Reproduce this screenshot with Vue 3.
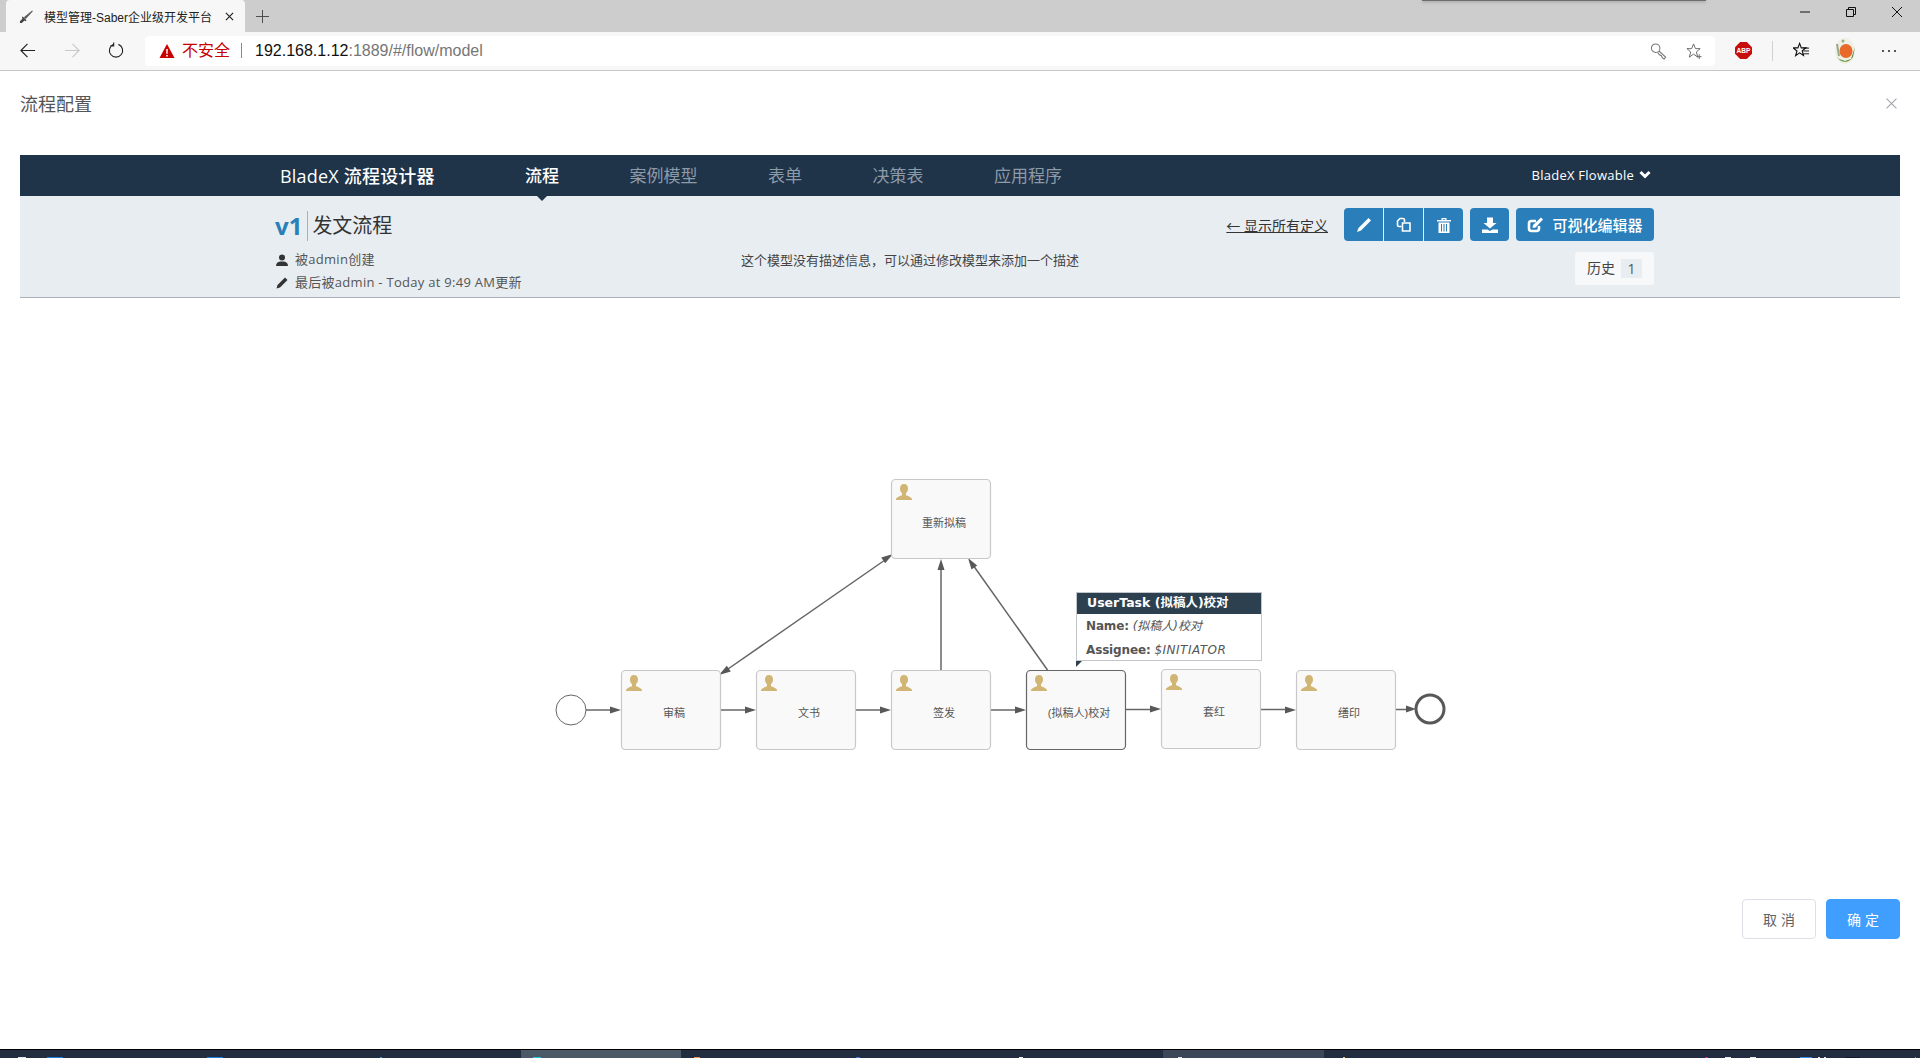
<script setup>
const navItems = ['案例模型', '表单', '决策表', '应用程序']

const nodes = [
  { x: 621, y: 670, label: '审稿', dy: 47 },
  { x: 756, y: 670, label: '文书', dy: 47 },
  { x: 891, y: 670, label: '签发', dy: 47 },
  { x: 1026, y: 670, label: '(拟稿人)校对', dy: 47, active: true },
  { x: 1161, y: 669, label: '套红', dy: 47 },
  { x: 1296, y: 670, label: '缮印', dy: 47 },
  { x: 891, y: 479, label: '重新拟稿', dy: 48 }
]

const edges = [
  { d: 'M586 710H612', arrows: ['M621 710l-11 -3.5v7z'] },
  { d: 'M720 710H747', arrows: ['M756 710l-11 -3.5v7z'] },
  { d: 'M855 710H882', arrows: ['M891 710l-11 -3.5v7z'] },
  { d: 'M990 710H1017', arrows: ['M1026 710l-11 -3.5v7z'] },
  { d: 'M1125 709.5H1152', arrows: ['M1161 709l-11 -3.5v7z'] },
  { d: 'M1260 709.5H1287', arrows: ['M1296 710l-11 -3.5v7z'] },
  { d: 'M1395 709.5H1408', arrows: ['M1416 709l-10 -3.5v7z'] },
  { d: 'M728 669L885 560', arrows: ['M719 675l7.8 -9.2l4 5.8z', 'M893 554l-7.8 9.2l-4 -5.8z'] },
  { d: 'M941 670V569', arrows: ['M941 559l-3.5 11h7z'] },
  { d: 'M1047.5 670L973 565', arrows: ['M968 558l9.2 7.6l-5.7 4z'] }
]

const chips = [
  { left: 18, width: 8, color: '#e8e8e8' },
  { left: 47, width: 16, color: '#1a7fe0' },
  { left: 207, width: 16, color: '#1a7fe0' },
  { left: 380, width: 2, color: '#2a9fd8' },
  { left: 533, width: 8, color: '#26c6da' },
  { left: 694, width: 6, color: '#e8975a' },
  { left: 856, width: 4, color: '#3b78d8' },
  { left: 1019, width: 4, color: '#f0f0f0' },
  { left: 1178, width: 4, color: '#e0e0e0' },
  { left: 1343, width: 2, color: '#e8d060' },
  { left: 1705, width: 3, color: '#e010a0' },
  { left: 1725, width: 6, color: '#e8e8e8' },
  { left: 1750, width: 6, color: '#e8e8e8' },
  { left: 1800, width: 12, color: '#3a8ee0' },
  { left: 1818, width: 2, color: '#e8e8e8' },
  { left: 1824, width: 2, color: '#e8e8e8' },
  { left: 1845, width: 15, color: '#111a26' },
  { left: 1915, width: 1, color: '#8a94a0' }
]
</script>

<template>
  <div class="screen">
    <div class="tabstrip">
      <div class="tab">
        <svg class="favicon" viewBox="0 0 16 16"><path d="M14 1.5l.8.8-7.6 8.4-2-2z" fill="#5c5c5c"/><path d="M4 8l4 4-1 1-1.2-.8L3 15l-2 0 0-2 2.8-2.8L3 9z" fill="#444"/></svg>
        <span class="tab-title">模型管理-Saber企业级开发平台</span>
        <svg class="tab-x" viewBox="0 0 10 10"><path d="M1 1l8 8M9 1l-8 8" stroke="#222" stroke-width="1.3"/></svg>
      </div>
      <svg class="tab-plus" viewBox="0 0 14 14"><path d="M7 0v14M0 7h14" stroke="#444" stroke-width="1"/></svg>
      <div class="strip-shadow"></div>
      <div class="win-controls">
        <svg viewBox="0 0 12 12"><path d="M1 6h10" stroke="#111" stroke-width="1"/></svg>
        <svg viewBox="0 0 12 12"><path d="M1.5 3.5h7v7h-7zM3.5 3.5v-2h7v7h-2" fill="none" stroke="#111" stroke-width="1"/></svg>
        <svg viewBox="0 0 12 12"><path d="M1 1l10 10M11 1L1 11" stroke="#111" stroke-width="1"/></svg>
      </div>
    </div>

    <div class="toolbar">
      <svg class="tool-back" viewBox="0 0 18 18"><path d="M17 9H2M9 2L2 9l7 7" fill="none" stroke="#222" stroke-width="1.2"/></svg>
      <svg class="tool-fwd" viewBox="0 0 18 18"><path d="M1 9h15M9 2l7 7-7 7" fill="none" stroke="#c8c8c8" stroke-width="1.2"/></svg>
      <svg class="tool-reload" viewBox="0 0 18 18"><path d="M6 2.5a7 7 0 1 0 5 0M6 .5v3.6H2.5" fill="none" stroke="#222" stroke-width="1.2"/></svg>
      <div class="address">
        <svg class="warn" viewBox="0 0 16 16"><path d="M8 1l7.5 14H.5z" fill="#c80000"/><path d="M7.2 6h1.6l-.2 5H7.4zM7.2 12h1.6v1.5H7.2z" fill="#fff"/></svg>
        <span class="insecure">不安全</span>
        <span class="addr-sep"></span>
        <span class="url"><b>192.168.1.12</b>:1889/#/flow/model</span>
        <span class="addr-spacer"></span>
        <svg class="addr-key" viewBox="0 0 18 18"><circle cx="6" cy="6" r="4.5" fill="none" stroke="#777" stroke-width="1.1"/><path d="M9.5 9l7 6.5-1.5 2-2-1.5-1-2-2-1-2-2.5" fill="none" stroke="#777" stroke-width="1.1"/></svg>
        <svg class="addr-star" viewBox="0 0 18 18"><path d="M8 1.5l2 5h5l-4 3.5 1.5 5.5L8 12.3 3.500 15.500 5 10 1 6.500h5z" fill="none" stroke="#666" stroke-width="1"/><path d="M14 12.500v5M11.500 15h5" stroke="#666" stroke-width="1"/></svg>
      </div>
      <svg class="abp" viewBox="0 0 18 18"><path d="M5.500 0h7L18 5.500v7L12.500 18h-7L0 12.500v-7z" fill="#c70d0d"/><text x="9" y="12" text-anchor="middle" class="abp-text">ABP</text></svg>
      <span class="tool-sep"></span>
      <svg class="fav-list" viewBox="0 0 18 18"><path d="M7 1.500l1.800 4.700h5l-4 3.100 1.300 5L7 11.500l-4.200 3 1.400-5-4-3.300h5z" fill="none" stroke="#111" stroke-width="1.200"/><path d="M11 6.500h6M11 9.500h6M11 12.500h6" stroke="#111" stroke-width="1"/></svg>
      <svg class="avatar" viewBox="0 0 22 28"><ellipse cx="11" cy="14" rx="10" ry="13" fill="#eef0e4"/><path d="M3 20a10 12 0 0 0 16 0l2-10-4 12-6 2-6-2z" fill="#5d8a3a"/><ellipse cx="12" cy="14" rx="6.500" ry="7" fill="#e8692a"/><path d="M3 7l2 12" stroke="#9aa888" stroke-width="2"/><circle cx="9" cy="4" r="1.500" fill="#9aa888"/></svg>
      <svg class="dots" viewBox="0 0 16 4"><circle cx="2" cy="2" r="1" fill="#222"/><circle cx="8" cy="2" r="1" fill="#222"/><circle cx="14" cy="2" r="1" fill="#222"/></svg>
    </div>

    <div class="dialog">
      <header class="dialog-head">
        <span>流程配置</span>
        <svg class="dialog-x" viewBox="0 0 10 10"><path d="M.5.5l9 9M9.500.5l-9 9" stroke="#a0a4aa" stroke-width="1"/></svg>
      </header>

      <section class="panel">
        <nav class="topnav">
          <span class="brand">BladeX 流程设计器</span>
          <span class="nav-item current">流程</span>
          <span v-for="item in navItems" :key="item" class="nav-item">{{ item }}</span>
          <span class="nav-user">
            BladeX Flowable
            <svg viewBox="0 0 12 9"><path d="M1.500 2L6 6.500 10.500 2" fill="none" stroke="#fff" stroke-width="3"/></svg>
          </span>
        </nav>

        <div class="subhead">
          <div class="sub-left">
            <div class="version-row"><span class="version">v1</span><span class="model-name">发文流程</span></div>
            <div class="meta">
              <svg viewBox="0 0 12 12"><circle cx="6" cy="3.500" r="3" fill="#333"/><path d="M0 12c0-3 2-4 4-4.500h4c2 .5 4 1.500 4 4.500z" fill="#333"/></svg>
              被admin创建
            </div>
            <div class="meta">
              <svg viewBox="0 0 12 12"><path d="M9 .5l2.500 2.500-7.500 7.500-3.500 1 1-3.500z" fill="#333"/></svg>
              最后被admin - Today at 9:49 AM更新
            </div>
          </div>
          <div class="sub-desc">这个模型没有描述信息，可以通过修改模型来添加一个描述</div>
          <div class="sub-right">
            <div class="actions">
              <a class="back-link">← 显示所有定义</a>
              <div class="btn-group">
                <button class="btn icon-btn"><svg viewBox="0 0 16 16"><path d="M12.500 1L15 3.500 5 13.500 1 15l1.500-4z" fill="#fff"/></svg></button>
                <button class="btn icon-btn"><svg viewBox="0 0 16 16"><path d="M8.500 5V3a1.500 1.500 0 0 0-1.500-1.500H4L1.500 4v4A1.500 1.500 0 0 0 3 9.500h2.500" fill="none" stroke="#fff" stroke-width="1.600"/><path d="M6.500 6h7.500v8H6.500z" fill="none" stroke="#fff" stroke-width="1.600"/></svg></button>
                <button class="btn icon-btn"><svg viewBox="0 0 16 16"><path d="M1 3h14v1.500H1zM5.500 3V1h5v2h-1.200V2.200H6.700V3z" fill="#fff"/><path d="M2.500 5.500h11V16h-11z" fill="#fff"/><path d="M5.500 7v7.500M8 7v7.500M10.500 7v7.500" stroke="#2a7fba" stroke-width="1"/></svg></button>
              </div>
              <button class="btn single icon-btn"><svg viewBox="0 0 16 16"><path d="M5 1h6v5.500h3.500L8 12 1.500 6.500H5z" fill="#fff" transform="translate(0 -.5)"/><path d="M0 12.500h5.500L8 14l2.500-1.500H16V16H0z" fill="#fff"/></svg></button>
              <button class="btn visual">
                <svg viewBox="0 0 16 16"><path d="M12 9v2.500A2.500 2.500 0 0 1 9.500 14h-5A2.500 2.500 0 0 1 2 11.500v-5A2.500 2.500 0 0 1 4.500 4H9" fill="none" stroke="#fff" stroke-width="2.600"/><path d="M14 .5L16 2.500 8.500 10.500 5.500 11l.5-3z" fill="#fff"/></svg>
                可视化编辑器
              </button>
            </div>
            <div class="history"><span class="history-label">历史</span><span class="badge">1</span></div>
          </div>
        </div>

        <div class="canvas">
          <svg class="diagram" viewBox="20 298 1880 601" width="1880" height="601">
            <circle cx="571" cy="710" r="15" fill="#fff" stroke="#666" stroke-width="1"/>
            <circle cx="1430" cy="709" r="14" fill="#fff" stroke="#585858" stroke-width="3"/>
            <g v-for="(edge, i) in edges" :key="i">
              <path :d="edge.d" fill="none" stroke="#666" stroke-width="1.500"/>
              <path v-for="a in edge.arrows" :key="a" :d="a" fill="#585858"/>
            </g>
            <g v-for="n in nodes" :key="n.label">
              <rect :x="n.x + .5" :y="n.y + .5" width="99" height="79" rx="4" fill="#f9f9f9" :stroke="n.active ? '#666' : '#c8c8c8'" stroke-width="1.200"/>
              <g :transform="`translate(${n.x + 5} ${n.y + 5})`">
                <path d="M8 0c2.600 0 4 2 4 4.500 0 2-.8 3.700-2 4.700v2c1.800.7 4.500 1.500 6 3.600v1.200H0v-1.200c1.500-2.100 4.200-2.900 6-3.600v-2C4.800 8.200 4 6.500 4 4.500 4 2 5.400 0 8 0z" fill="#d1b574"/>
              </g>
              <text :x="n.x + 53" :y="n.y + n.dy" text-anchor="middle" class="node-label">{{ n.label }}</text>
            </g>
          </svg>

          <div class="tip">
            <div class="tip-head">UserTask (拟稿人)校对</div>
            <div class="tip-row"><b>Name:</b> <i>(拟稿人)校对</i></div>
            <div class="tip-row"><b>Assignee:</b> <i class="assignee">$INITIATOR</i></div>
            <span class="tip-tail"></span>
          </div>
        </div>

        <div class="dialog-foot">
          <button class="foot-btn cancel">取 消</button>
          <button class="foot-btn ok">确 定</button>
        </div>
      </section>
    </div>

    <div class="taskbar">
      <span class="task-hi one"></span>
      <span class="task-hi two"></span>
      <span v-for="c in chips" :key="c.left" class="chip" :style="{ left: c.left + 'px', width: c.width + 'px', background: c.color }"></span>
    </div>
  </div>
</template>

<style>
html, body { margin: 0; background: #fff; }
</style>

<style scoped>
.screen {
  width: 1920px;
  height: 1058px;
  display: flex;
  flex-direction: column;
  overflow: hidden;
  font-family: "Open Sans", "Noto Sans CJK SC", sans-serif;
  color: #333;
  background: #fff;
}
.tabstrip {
  height: 32px;
  flex: none;
  background: #cdcdcd;
  display: flex;
  align-items: flex-end;
  padding-left: 6px;
  position: relative;
}
.tab {
  width: 239px;
  height: 32px;
  box-sizing: border-box;
  background: #f7f7f7;
  border-radius: 4px 4px 0 0;
  display: flex;
  align-items: center;
  padding: 0 11px 0 13px;
}
.favicon { width: 15px; height: 15px; flex: none; }
.tab-title {
  margin-left: 10px;
  flex: 1;
  font-size: 12px;
  color: #222;
  white-space: nowrap;
  font-family: "Liberation Sans", "Noto Sans CJK SC", sans-serif;
}
.tab-x { width: 9px; height: 9px; flex: none; }
.tab-plus { width: 13px; height: 13px; margin: 0 0 9px 11px; }
.strip-shadow {
  position: absolute;
  left: 1422px;
  width: 284px;
  top: 0;
  height: 1px;
  background: #6e6e6e;
  box-shadow: 0 1px 3px #808080;
}
.win-controls {
  margin-left: auto;
  display: flex;
  gap: 34px;
  padding: 0 17px 14px 0;
}
.win-controls svg { width: 12px; height: 12px; display: block; }
.toolbar {
  height: 39px;
  flex: none;
  box-sizing: border-box;
  background: #f7f7f7;
  border-bottom: 1px solid #c6c6c6;
  display: flex;
  align-items: center;
  padding: 0 0 1px 19px;
}
.tool-back, .tool-fwd, .tool-reload { width: 17px; height: 17px; flex: none; }
.tool-fwd { margin-left: 28px; }
.tool-reload { margin-left: 27px; }
.address {
  margin-left: 20px;
  width: 1570px;
  height: 30px;
  flex: none;
  background: #fff;
  border-radius: 4px;
  display: flex;
  align-items: center;
  padding-left: 14px;
  box-sizing: border-box;
}
.warn { width: 16px; height: 16px; flex: none; }
.insecure { margin-left: 7px; font-size: 16px; color: #c80000; line-height: 1; font-family: "Liberation Sans", "Noto Sans CJK SC", sans-serif; }
.addr-sep { width: 1px; height: 15px; background: #888; margin: 0 13px 0 11px; }
.url { font-size: 16px; color: #767676; font-family: "Liberation Sans", sans-serif; }
.url b { font-weight: 400; color: #111; }
.addr-spacer { flex: 1; }
.addr-key { width: 17px; height: 18px; margin-right: 19px; }
.addr-star { width: 17px; height: 18px; margin-right: 12px; }
.abp { width: 17px; height: 17px; margin-left: 20px; flex: none; }
.abp-text { font: 700 7px "Liberation Sans", sans-serif; fill: #fff; }
.tool-sep { width: 1px; height: 20px; background: #d0d0d0; margin-left: 20px; }
.fav-list { width: 17px; height: 17px; margin-left: 20px; flex: none; }
.avatar { width: 22px; height: 28px; margin-left: 24px; flex: none; }
.dots { width: 16px; height: 4px; margin-left: 25px; flex: none; }

.dialog {
  flex: 1;
  min-height: 0;
  display: flex;
  flex-direction: column;
  padding: 0 20px;
}
.dialog-head {
  height: 84px;
  flex: none;
  display: flex;
  align-items: flex-start;
  justify-content: space-between;
  padding-top: 20px;
  box-sizing: border-box;
  font-size: 18px;
  line-height: 26px;
  color: #555;
}
.dialog-x { width: 11px; height: 11px; margin: 7px 3px 0 0; }
.panel { flex: 1; min-height: 0; display: flex; flex-direction: column; }

.topnav {
  height: 41px;
  flex: none;
  box-sizing: border-box;
  background: #1f3349;
  display: flex;
  align-items: center;
  padding: 0 249px 2px 260px;
  color: #fff;
}
.brand { font-size: 18px; width: 245px; font-weight: 500; letter-spacing: .2px; white-space: nowrap; flex: none; }
.nav-item {
  font-size: 17px;
  color: #8d9aa8;
  margin-right: 70.500px;
  white-space: nowrap;
  position: relative;
}
.nav-item.current { color: #fff; font-weight: 500; }
.nav-item.current::after {
  content: "";
  position: absolute;
  left: 50%;
  bottom: -14px;
  margin-left: -6px;
  border: 6px solid transparent;
  border-bottom-width: 0;
  border-top-color: #1f3349;
}
.nav-user {
  margin-left: auto;
  font-size: 13px;
  font-weight: 500;
  letter-spacing: .25px;
  display: flex;
  align-items: center;
  gap: 5px;
  white-space: nowrap;
}
.nav-user svg { width: 12px; height: 9px; }

.subhead {
  height: 102px;
  flex: none;
  box-sizing: border-box;
  background: #e8edf1;
  border-bottom: 1px solid #a9b1ba;
  display: flex;
  padding: 0 246px 0 255px;
}
.sub-left { width: 466px; flex: none; }
.version-row { display: flex; align-items: center; height: 30px; margin-top: 15px; }
.version {
  font-size: 24px;
  font-weight: 700;
  color: #2980b9;
  line-height: 30px;
  padding-right: 5px;
  border-right: 1px solid #a9b1ba;
}
.model-name { font-size: 20px; color: #333; margin-left: 4px; line-height: 30px; }
.meta {
  font-size: 13px;
  line-height: 23px;
  letter-spacing: .28px;
  color: #555;
  display: flex;
  align-items: center;
  gap: 7px;
  white-space: nowrap;
  margin-left: 1px;
}
.version-row + .meta { margin-top: 7px; }
.meta svg { width: 12px; height: 12px; flex: none; }
.sub-desc { font-size: 13px; color: #444; white-space: nowrap; margin-top: 53px; line-height: 23px; }
.sub-right { margin-left: auto; display: flex; flex-direction: column; align-items: flex-end; }
.actions { display: flex; align-items: center; margin-top: 12px; }
.back-link { font-size: 14px; color: #333; text-decoration: underline; margin-right: 16px; white-space: nowrap; }
.btn-group { display: flex; border-radius: 4px; overflow: hidden; gap: 1px; background: #e8edf1; }
.btn {
  height: 33px;
  border: 0;
  padding: 0;
  background: #2a7fba;
  color: #fff;
  display: flex;
  align-items: center;
  justify-content: center;
  font-family: inherit;
}
.icon-btn { width: 39px; }
.icon-btn svg { width: 16px; height: 16px; }
.single { margin-left: 7px; border-radius: 4px; }
.visual { margin-left: 7px; border-radius: 4px; width: 138px; font-size: 15px; font-weight: 500; gap: 9px; }
.visual svg { width: 16px; height: 16px; }
.history {
  margin-top: 11px;
  width: 79px;
  height: 33px;
  box-sizing: border-box;
  background: #f6f8f9;
  border-radius: 3px;
  display: flex;
  align-items: center;
  justify-content: space-between;
  padding: 0 12px;
  font-size: 14px;
  color: #444;
}
.history-label { line-height: 19px; margin-top: -2px; }
.badge { width: 21px; height: 19px; background: #e8edf1; text-align: center; line-height: 19px; font-size: 14px; color: #555; }

.canvas { position: relative; height: 601px; flex: none; }
.diagram { display: block; }
.node-label { font-size: 11px; fill: #555; font-family: "Liberation Sans", "Noto Sans CJK SC", sans-serif; }
.tip {
  position: absolute;
  left: 1056px;
  top: 294px;
  width: 186px;
  height: 69px;
  box-sizing: border-box;
  border: 1px solid #c2c6ca;
  background: #fff;
  font-family: "DejaVu Sans", "Noto Sans CJK SC", sans-serif;
  font-size: 12px;
  color: #555;
}
.tip-head {
  height: 21px;
  background: #2c4050;
  color: #fff;
  font-weight: 700;
  font-size: 12.500px;
  line-height: 20px;
  padding-left: 10px;
  white-space: nowrap;
}
.tip-row { line-height: 24px; padding-left: 9px; white-space: nowrap; }
.tip-row b { font-weight: 700; letter-spacing: -.15px; }
.assignee { letter-spacing: .5px; }
.tip-tail {
  position: absolute;
  left: -1px;
  bottom: -7px;
  border-top: 6px solid #2c4050;
  border-right: 6px solid transparent;
}

.dialog-foot {
  display: flex;
  justify-content: flex-end;
  gap: 10px;
}
.foot-btn {
  width: 74px;
  height: 40px;
  box-sizing: border-box;
  border-radius: 4px;
  font-size: 14px;
  font-family: "Liberation Sans", "Noto Sans CJK SC", sans-serif;
  padding: 0;
}
.cancel { background: #fff; border: 1px solid #dcdfe6; color: #606266; }
.ok { background: #409eff; border: 1px solid #409eff; color: #fff; }

.taskbar {
  height: 9px;
  flex: none;
  box-sizing: border-box;
  background: #222e40;
  border-top: 1px solid #000;
  position: relative;
}
.task-hi { position: absolute; top: 0; bottom: 0; }
.task-hi.one { left: 521px; width: 160px; background: #4c5a68; }
.task-hi.two { left: 1163px; width: 161px; background: #3c4858; }
.chip { position: absolute; bottom: 0; height: 1px; }
</style>
